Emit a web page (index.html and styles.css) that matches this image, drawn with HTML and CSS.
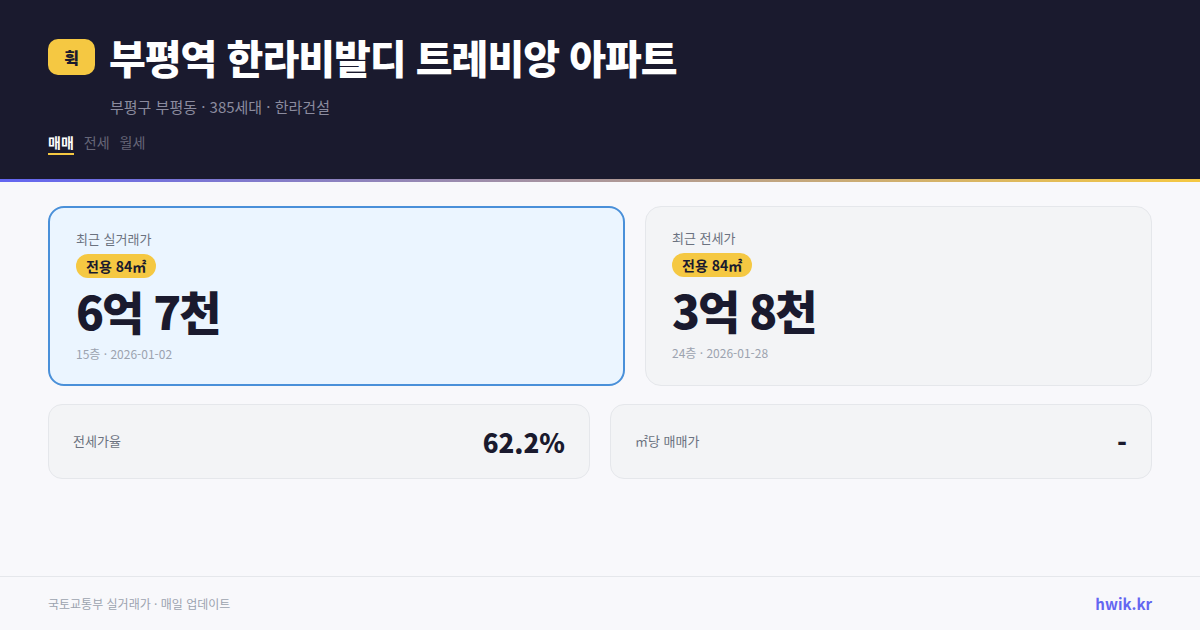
FILE: index.html
```html
<!DOCTYPE html>
<html lang="ko">
<head>
<meta charset="utf-8">
<title>부평역 한라비발디 트레비앙 아파트</title>
<link rel="stylesheet" href="styles.css">
</head>
<body>
<div class="page">
  <header class="hero">
    <div class="title-row">
      <span class="logo">휙</span>
      <h1 class="title">부평역 한라비발디 트레비앙 아파트</h1>
    </div>
    <p class="sub">부평구 부평동 · 385세대 · 한라건설</p>
    <nav class="tabs">
      <span class="tab active">매매</span>
      <span class="tab">전세</span>
      <span class="tab">월세</span>
    </nav>
  </header>
  <div class="accent"></div>
  <main class="content">
    <section class="price-row">
      <article class="card card-main">
        <div class="label">최근 실거래가</div>
        <span class="pill">전용 84㎡</span>
        <div class="price">6억 7천</div>
        <div class="meta">15층 · 2026-01-02</div>
      </article>
      <article class="card">
        <div class="label">최근 전세가</div>
        <span class="pill">전용 84㎡</span>
        <div class="price">3억 8천</div>
        <div class="meta">24층 · 2026-01-28</div>
      </article>
    </section>
    <section class="stat-row">
      <div class="stat"><span class="stat-label">전세가율</span><span class="stat-value">62.2%</span></div>
      <div class="stat"><span class="stat-label">㎡당 매매가</span><span class="stat-value">-</span></div>
    </section>
  </main>
  <footer class="footer">
    <span class="source">국토교통부 실거래가 · 매일 업데이트</span>
    <span class="brand">hwik.kr</span>
  </footer>
</div>
</body>
</html>
```
FILE: styles.css
```css
* { box-sizing: border-box; margin: 0; padding: 0; }
html, body { width: 1200px; height: 630px; overflow: hidden; }
body {
  font-family: "Noto Sans CJK KR", "Noto Sans", sans-serif;
  background: #f8f8fb;
  color: #1a1a2e;
}
.page { width: 1200px; height: 630px; display: flex; flex-direction: column; }
.hero { height: 179px; background: #1a1a2e; padding: 30px 48px 0; }
.title-row { display: flex; align-items: center; gap: 14px; height: 54px; }
.logo {
  width: 47px; height: 36px; border-radius: 10px; background: #f5c842;
  color: #1a1a2e; font-size: 16px; font-weight: 900;
  display: flex; align-items: center; justify-content: center;
}
.title { font-size: 40px; font-weight: 800; line-height: 54px; color: #fff; letter-spacing: -1px; }
.sub { font-size: 15px; line-height: 22px; color: #8b8b9e; margin: 12px 0 0 62px; }
.tabs { display: flex; gap: 10px; margin-top: 14px; }
.tab { font-size: 14px; line-height: 20px; color: #666678; padding-bottom: 1px; border-bottom: 2px solid transparent; }
.tab.active { color: #fff; font-weight: 700; border-bottom-color: #f5c842; }
.accent { height: 3px; background: linear-gradient(90deg, #6366f1, #f5c842); }
.content { flex: 1; padding: 24px 48px 0; display: flex; flex-direction: column; gap: 18px; }
.price-row { display: grid; grid-template-columns: 577fr 507fr; gap: 20px; }
.card {
  height: 180px; background: #f3f4f6; border: 1px solid #e5e7eb; border-radius: 16px;
  padding: 21px 26px;
  display: flex; flex-direction: column; align-items: flex-start;
}
.card-main { background: #ebf5ff; border: 2px solid #4a90d9; }
.label { font-size: 13px; line-height: 19px; color: #6b7280; }
.pill {
  font-size: 14px; font-weight: 700; line-height: 24px; height: 24px;
  background: #f5c842; color: #1a1a2e; border-radius: 12px; padding: 0 10px; margin-top: 6px;
}
.price { font-size: 46px; font-weight: 800; line-height: 60px; letter-spacing: -2px; color: #1a1a2e; margin-top: 2px; }
.meta { font-size: 12px; line-height: 18px; color: #9ca3af; margin-top: 5px; }
.stat-row { display: grid; grid-template-columns: 1fr 1fr; gap: 20px; }
.stat {
  height: 75px; background: #f3f4f6; border: 1px solid #e5e7eb; border-radius: 14px;
  padding: 0 24px; display: flex; align-items: center; justify-content: space-between;
}
.stat-label { font-size: 13px; color: #6b7280; line-height: 18px; padding-bottom: 1px; }
.stat-value { font-size: 26px; font-weight: 800; color: #1a1a2e; line-height: 38px; }
.footer {
  height: 54px; border-top: 1px solid #e5e7eb; padding: 0 48px;
  display: flex; align-items: center; justify-content: space-between;
}
.source { font-size: 12px; color: #9ca3af; }
.brand { font-size: 15px; font-weight: 700; color: #6366f1; }
```
